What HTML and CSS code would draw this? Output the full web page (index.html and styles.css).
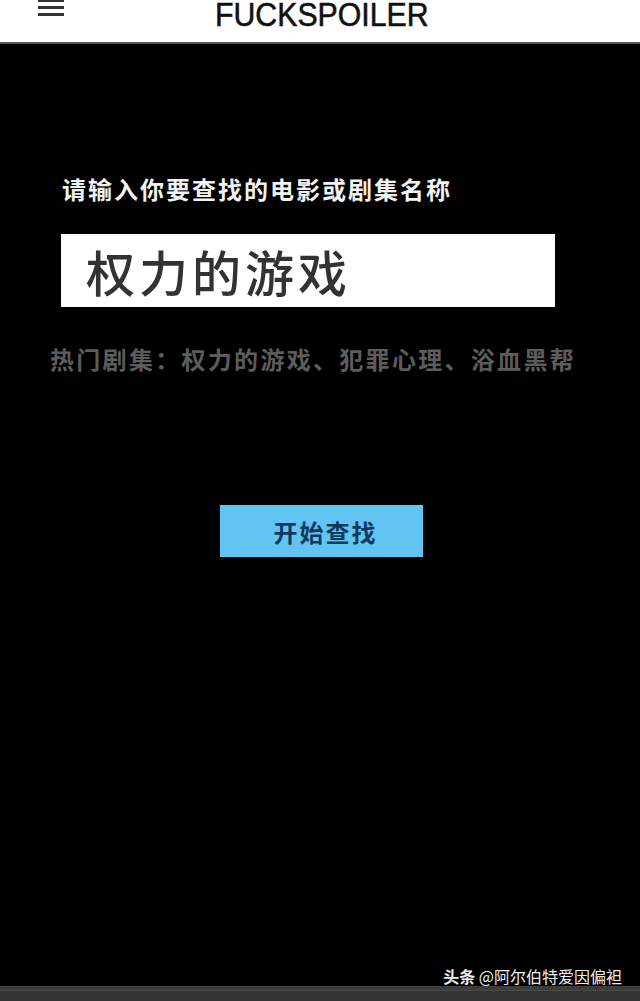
FILE: index.html
```html
<!DOCTYPE html>
<html lang="zh-CN">
<head>
    <meta charset="UTF-8">
    <meta name="viewport" content="width=device-width, initial-scale=1.0">
    <title>FUCKSPOILER</title>
    <link rel="stylesheet" href="styles.css">
</head>
<body>
    <header class="topbar">
        <div class="menu-btn">
            <span></span>
            <span></span>
            <span></span>
        </div>
        <h1 class="logo">FUCKSPOILER</h1>
    </header>
    <main class="search">
        <p class="label">请输入你要查找的电影或剧集名称</p>
        <div class="field">权力的游戏</div>
        <p class="hot">热门剧集：权力的游戏、犯罪心理、浴血黑帮</p>
        <div class="actions">
            <button class="go">开始查找</button>
        </div>
    </main>
    <div class="mark"><b>头条</b> @阿尔伯特爱因偏袒</div>
    <div class="bottombar"></div>
</body>
</html>
```

FILE: styles.css
```css
body {
    margin: 0;
    padding: 0;
    width: 640px;
    height: 1001px;
    overflow: hidden;
    background-color: #000;
    font-family: "Noto Sans CJK SC", "Liberation Sans", sans-serif;
    display: flex;
    flex-direction: column;
}
.topbar {
    height: 42px;
    flex-shrink: 0;
    background-color: #fff;
    border-bottom: 2px solid #555;
    position: relative;
    display: flex;
    justify-content: center;
    overflow: hidden;
}
.menu-btn {
    position: absolute;
    left: 38px;
    top: -1px;
    width: 26px;
    display: flex;
    flex-direction: column;
    gap: 4px;
}
.menu-btn span {
    display: block;
    height: 3px;
    background-color: #333;
}
.logo {
    margin: 0;
    margin-top: -4px;
    padding-left: 3px;
    font-family: "Liberation Sans", Arial, sans-serif;
    font-weight: normal;
    font-size: 34px;
    line-height: 36px;
    color: #111;
    transform: scaleX(0.89);
    -webkit-text-stroke: 0.6px #111;
}
.search {
    flex: 1;
    padding: 124px 0 0 0;
}
.label {
    margin: 0 0 0 62px;
    color: #f2f2f2;
    font-size: 24px;
    line-height: 42px;
    letter-spacing: 2px;
    font-weight: bold;
}
.field {
    margin: 24px 0 0 61px;
    width: 469px;
    height: 73px;
    padding-left: 25px;
    background-color: #fff;
    color: #333;
    font-size: 49px;
    line-height: 73px;
    letter-spacing: 4px;
    font-weight: 500;
}
.hot {
    margin: 37px 0 0 50px;
    color: #5c5c5c;
    font-size: 24px;
    line-height: 30px;
    letter-spacing: 2.3px;
    font-weight: bold;
}
.actions {
    margin-top: 131px;
    padding-left: 220px;
}
.go {
    width: 203px;
    height: 52px;
    border: none;
    border-radius: 0;
    background-color: #62c4f3;
    color: #0e3a60;
    font-family: "Noto Sans CJK SC", sans-serif;
    font-size: 24px;
    letter-spacing: 2px;
    font-weight: bold;
    padding: 0 0 0 8px;
}
.mark {
    text-align: right;
    padding-right: 18px;
    color: #eee;
    font-size: 16px;
    line-height: 22px;
    margin-bottom: -1px;
}
.bottombar {
    height: 11px;
    flex-shrink: 0;
    background-color: #333;
    border-top: 4px solid #3c3c3c;
    box-shadow: inset 0 1px 0 #4a4a4a;
}
```
